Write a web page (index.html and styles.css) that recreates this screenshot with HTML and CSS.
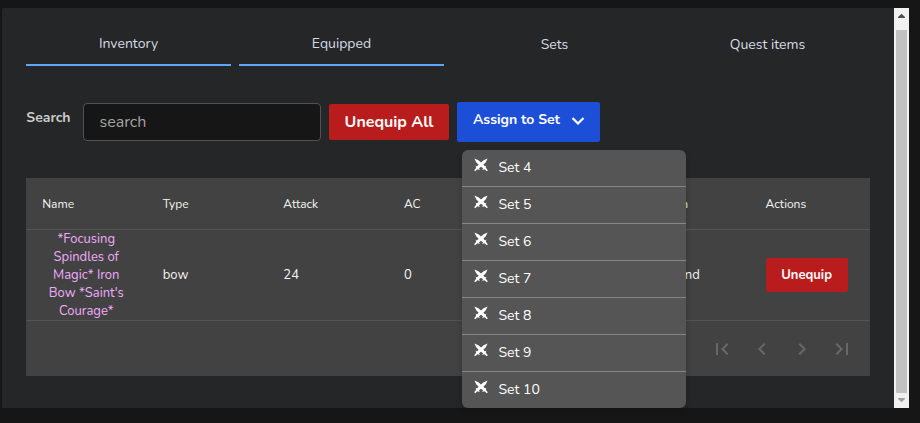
FILE: index.html
```
<!DOCTYPE html>
<html lang="en">
<head>
<meta charset="utf-8">
<title>Inventory</title>
<link rel="stylesheet" href="styles.css">
</head>
<body>
<svg width="0" height="0" class="defs" aria-hidden="true">
  <symbol id="swords" viewBox="0 0 14 14">
    <path d="M0.4 0.4L4.4 2.2L7 4.6L9.6 2.2L13.6 0.4L11.8 4.2L9.4 6.8L11 8.6L12.4 7.6L11.8 9.8L13.8 12.2L12.8 13.2L10.6 11.3L8.2 12L9 10.2L7 8.8L5 10.2L5.8 12L3.4 11.3L1.2 13.2L0.2 12.2L2.2 9.8L1.6 7.6L3 8.6L4.6 6.8L2.2 4.2Z" fill="#fff"/>
  </symbol>
</svg>
<main class="window">
  <section class="panel">
    <nav class="tabs">
      <a class="tab active">Inventory</a>
      <a class="tab active">Equipped</a>
      <a class="tab">Sets</a>
      <a class="tab">Quest items</a>
    </nav>
    <div class="toolbar">
      <label class="search-label" for="q">Search</label>
      <input class="search" id="q" type="text" placeholder="search">
      <button class="btn unequip-all">Unequip All</button>
      <div class="dropdown">
        <button class="btn assign">Assign to Set
          <svg class="chevron" viewBox="0 0 14 10"><path d="M1.5 2L7 7.5L12.5 2" fill="none" stroke="#fff" stroke-width="2.2"/></svg>
        </button>
        <ul class="menu">
          <li><svg class="swords"><use href="#swords"/></svg>Set 4</li>
          <li><svg class="swords"><use href="#swords"/></svg>Set 5</li>
          <li><svg class="swords"><use href="#swords"/></svg>Set 6</li>
          <li><svg class="swords"><use href="#swords"/></svg>Set 7</li>
          <li><svg class="swords"><use href="#swords"/></svg>Set 8</li>
          <li><svg class="swords"><use href="#swords"/></svg>Set 9</li>
          <li><svg class="swords"><use href="#swords"/></svg>Set 10</li>
        </ul>
      </div>
    </div>
    <div class="table">
      <div class="row head">
        <div>Name</div><div>Type</div><div>Attack</div><div>AC</div><div></div><div>Position</div><div>Actions</div>
      </div>
      <div class="row item">
        <div class="name">*Focusing<br>Spindles of<br>Magic* Iron<br>Bow *Saint's<br>Courage*</div><div>bow</div><div>24</div><div>0</div><div></div><div class="hand">left-hand</div><div><button class="btn unequip">Unequip</button></div>
      </div>
      <div class="pager">
        <svg viewBox="0 0 24 24"><path d="M18.41 16.59L13.82 12l4.59-4.59L17 6l-6 6 6 6zM6 6h2v12H6z"/></svg>
        <svg viewBox="0 0 24 24"><path d="M15.41 7.41L14 6l-6 6 6 6 1.41-1.41L10.83 12z"/></svg>
        <svg viewBox="0 0 24 24"><path d="M10 6L8.59 7.41 13.17 12l-4.58 4.59L10 18l6-6z"/></svg>
        <svg viewBox="0 0 24 24"><path d="M5.59 7.41L10.18 12l-4.59 4.59L7 18l6-6-6-6zM16 6h2v12h-2z"/></svg>
      </div>
    </div>
  </section>
  <div class="scrollbar">
    <svg class="arrow-up" viewBox="0 0 15 22"><path d="M4 10V9L7.5 5.8L11 9V10Z" fill="#505050"/></svg>
    <div class="thumb"></div>
    <svg class="arrow-down" viewBox="0 0 15 15"><path d="M4 5H11V6L7.5 9.2L4 6Z" fill="#a3a3a3"/></svg>
  </div>
</main>
</body>
</html>
```
FILE: styles.css
```
* { box-sizing: border-box; }
body {
  margin: 0;
  height: 423px;
  padding: 8px 11px 15px 2px;
  background: #161616;
  font-family: Nunito, Lato, sans-serif;
  font-size: 14px;
  color: #fff;
  overflow: hidden;
}
.defs { position: absolute; }
.window { display: flex; height: 400px; }
.panel {
  width: 892px;
  padding: 16px 24px 0;
  background: #252628;
  border-radius: 2px 0 0 0;
}
.tabs { display: grid; grid-template-columns: repeat(4, 1fr); gap: 8px; height: 42px; }
.tab {
  display: flex;
  align-items: center;
  justify-content: center;
  color: #d5dbe3;
  padding-bottom: 1px;
}
.tab.active { border-bottom: 2px solid #60a5fa; }
.toolbar { display: flex; align-items: center; height: 40px; margin: 36px 0; }
.search-label {
  width: 57px;
  padding: 0 0 10px 0.3px;
  font-weight: 700;
  color: #cbcbca;
}
.search {
  width: 238px;
  height: 38px;
  margin-right: 8px;
  padding: 0 16px 0 15.5px;
  border: 1px solid #525252;
  border-radius: 4px;
  background: #161616;
  font: 16px Nunito, Lato, sans-serif;
}
.search::placeholder { color: #a3a3a3; opacity: 1; }
.btn {
  border: 0;
  padding: 0;
  border-radius: 2px;
  background: #b91c1c;
  color: #fff;
  font: 700 14px Nunito, Lato, sans-serif;
}
.unequip-all { width: 120px; height: 36px; margin-right: 8px; font-size: 16px; }
.dropdown { position: relative; }
.assign {
  display: flex;
  align-items: center;
  justify-content: space-between;
  width: 143px;
  height: 40px;
  padding: 0 15px 6px 16px;
  background: #1d4ed8;
}
.chevron { width: 14px; height: 10px; margin-top: 4px; }
.menu {
  position: absolute;
  top: 48px;
  left: 5px;
  width: 224px;
  margin: 0;
  padding: 0;
  list-style: none;
  overflow: hidden;
  border-radius: 6px;
  background: #555;
  box-shadow: 0 2px 6px #0003;
}
.menu li {
  display: flex;
  align-items: center;
  height: 37px;
  padding: 0 0 2px 11.5px;
  border-bottom: 1px solid #868686;
}
.menu li:last-child { height: 36px; border: 0; }
.swords { width: 14px; height: 14px; margin: -5px 11px 0 0; }
.table { height: 198px; background: #424242; color: #f3f3f3; }
.row {
  display: grid;
  grid-template-columns: repeat(7, 1fr);
  align-items: center;
  border-bottom: 1px solid #545454;
}
.row > div { padding-left: 16.2px; }
.head { height: 52px; font-size: 12px; }
.item { height: 91px; font-size: 13px; }
.row > .name {
  padding: 0 16px;
  text-align: center;
  line-height: 18px;
  white-space: nowrap;
  color: #f0abfc;
}
.row > .hand { padding-left: 17px; }
.unequip { display: block; width: 82px; height: 34px; font-size: 13px; }
.pager { display: flex; justify-content: flex-end; gap: 16px; padding: 16px 16px 0 0; }
.pager svg { width: 24px; height: 24px; fill: #686868; }
.scrollbar { width: 15px; background: #f1f1f1; }
.scrollbar svg { display: block; width: 15px; }
.arrow-up { height: 22px; }
.thumb { height: 363px; margin: 0 2px; background: #c1c1c1; }
.arrow-down { height: 15px; }
```
